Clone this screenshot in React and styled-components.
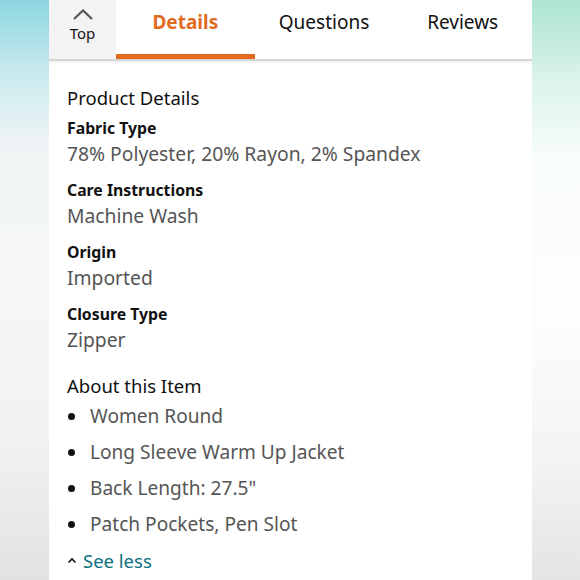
import React from "react";
import styled, { createGlobalStyle } from "styled-components";

const Global = createGlobalStyle`
  html, body {
    margin: 0;
    padding: 0;
  }
  body {
    font-family: "Noto Sans", "Open Sans", Arial, sans-serif;
    -webkit-font-smoothing: antialiased;
  }
`;

const Page = styled.div`
  display: flex;
  width: 580px;
  height: 580px;
  overflow: hidden;
`;

const SideLeft = styled.div`
  width: 49px;
  flex: none;
  background: linear-gradient(
    to bottom,
    #8dd6df 0%,
    #c6e9ee 12%,
    #eef4f5 24%,
    #f6f7f7 45%,
    #f2f2f3 75%,
    #e1e2e4 100%
  );
`;

const SideRight = styled.div`
  flex: 1;
  background: linear-gradient(
    to bottom,
    #ade5d2 0%,
    #dcf3eb 14%,
    #f9fdfb 28%,
    #fdfdfd 55%,
    #f3f3f4 80%,
    #e3e4e6 100%
  );
`;

const Panel = styled.div`
  width: 483px;
  flex: none;
  background: #fff;
  display: flex;
  flex-direction: column;
`;

const TabBar = styled.div`
  display: flex;
  height: 59px;
  border-bottom: 2px solid #d6d6d6;
  box-shadow: 0 2px 2px rgba(0, 0, 0, 0.05);
`;

const TopButton = styled.div`
  width: 67px;
  flex: none;
  background: #f3f3f3;
  display: flex;
  flex-direction: column;
  align-items: center;
  padding-top: 8px;
  box-sizing: border-box;
  font-size: 15px;
  color: #111;
  line-height: 20px;
  svg {
    display: block;
    margin-bottom: 3px;
  }
`;

const Tab = styled.div`
  flex: 1;
  display: flex;
  align-items: flex-start;
  justify-content: center;
  padding-top: 9px;
  box-sizing: border-box;
  font-size: 19px;
  line-height: 26px;
  color: ${(p) => (p.$active ? "#e06b1f" : "#111")};
  font-weight: ${(p) => (p.$active ? 700 : 400)};
  border-bottom: 5px solid ${(p) => (p.$active ? "#e3691e" : "transparent")};
`;

const Content = styled.div`
  padding: 24px 18px 0;
`;

const Heading = styled.div`
  font-size: 18.5px;
  line-height: 26px;
  color: #111;
  margin-bottom: 5px;
  margin-top: ${(p) => p.$gap || 0}px;
`;

const Group = styled.div`
  margin-bottom: 12px;
`;

const Label = styled.div`
  font-size: 15.8px;
  font-weight: 700;
  line-height: 25px;
  color: #111;
`;

const Value = styled.div`
  font-size: 19.3px;
  line-height: 25px;
  color: #555;
`;

const List = styled.ul`
  list-style: none;
  margin: -6px 0 0;
  padding: 0;
`;

const Item = styled.li`
  display: flex;
  align-items: center;
  height: 36px;
  font-size: 19.1px;
  color: #555;
  &::before {
    content: "";
    width: 7px;
    height: 7px;
    border-radius: 50%;
    background: #111;
    margin: 0 15px 0 1px;
    flex: none;
  }
`;

const SeeLess = styled.div`
  display: flex;
  align-items: center;
  gap: 6px;
  height: 36px;
  font-size: 18.5px;
  color: #0b717f;
`;

const details = [
  ["Fabric Type", "78% Polyester, 20% Rayon, 2% Spandex"],
  ["Care Instructions", "Machine Wash"],
  ["Origin", "Imported"],
  ["Closure Type", "Zipper"],
];

const bullets = [
  "Women Round",
  "Long Sleeve Warm Up Jacket",
  'Back Length: 27.5"',
  "Patch Pockets, Pen Slot",
];

export default function App() {
  return (
    <>
      <Global />
      <Page>
        <SideLeft />
        <Panel>
          <TabBar>
            <TopButton>
              <svg width="22" height="12" viewBox="0 0 22 12">
                <path d="M2 11 L11 2.5 L20 11" fill="none" stroke="#555" strokeWidth="2.2" />
              </svg>
              Top
            </TopButton>
            <Tab $active>Details</Tab>
            <Tab>Questions</Tab>
            <Tab>Reviews</Tab>
          </TabBar>
          <Content>
            <Heading>Product Details</Heading>
            {details.map(([k, v]) => (
              <Group key={k}>
                <Label>{k}</Label>
                <Value>{v}</Value>
              </Group>
            ))}
            <Heading $gap={21}>About this Item</Heading>
            <List>
              {bullets.map((b) => (
                <Item key={b}>{b}</Item>
              ))}
            </List>
            <SeeLess>
              <svg width="10" height="7" viewBox="0 0 10 7">
                <path d="M1.5 5.5 L5 2 L8.5 5.5" fill="none" stroke="#111" strokeWidth="1.6" />
              </svg>
              See less
            </SeeLess>
          </Content>
        </Panel>
        <SideRight />
      </Page>
    </>
  );
}
